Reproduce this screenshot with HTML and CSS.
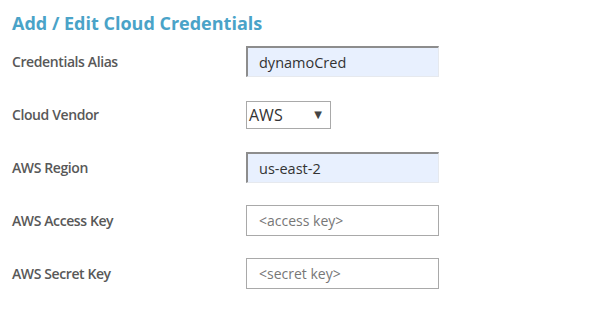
FILE: index.html
```html
<!DOCTYPE html>
<html lang="en">
<head>
    <meta charset="UTF-8">
    <meta name="viewport" content="width=device-width, initial-scale=1.0">
    <title>Add / Edit Cloud Credentials</title>
    <link rel="stylesheet" href="styles.css">
</head>
<body>

    <div class="cred-form">
        <h2>Add / Edit Cloud Credentials</h2>
        <div class="fields">
            <label class="field-label">Credentials Alias</label>
            <div class="field-input filled">dynamoCred</div>

            <label class="field-label">Cloud Vendor</label>
            <div class="field-select">
                <span>AWS</span>
                <span class="arrow">&#9660;</span>
            </div>

            <label class="field-label">AWS Region</label>
            <div class="field-input filled">us-east-2</div>

            <label class="field-label">AWS Access Key</label>
            <div class="field-input placeholder">&lt;access key&gt;</div>

            <label class="field-label">AWS Secret Key</label>
            <div class="field-input placeholder">&lt;secret key&gt;</div>
        </div>
    </div>

</body>
</html>
```

FILE: styles.css
```css
body {
    margin: 0;
    background: #fff;
    font-family: 'Open Sans', 'Liberation Sans', sans-serif;
}

.cred-form {
    padding: 10px 12px;
}

.cred-form h2 {
    margin: 0 0 10px 0;
    font-size: 18px;
    line-height: 26px;
    font-weight: 700;
    color: #4aa3c8; /* header blue */
}

.fields {
    display: grid;
    grid-template-columns: 234px 193px;
    grid-auto-rows: 31px;
    row-gap: 22px;
    align-items: center;
}

.field-label {
    font-size: 14px;
    font-weight: 600;
    letter-spacing: -0.4px;
    color: #585858;
}

.field-input {
    box-sizing: border-box;
    height: 31px;
    display: flex;
    align-items: center;
    padding-left: 12px;
    font-size: 14.5px;
    color: #333;
    border: 1px solid #a9a9a9;
}

/* autofilled look: inset border, pale blue */
.field-input.filled {
    background: #e8f0fe;
    border-style: solid;
    border-width: 2px 1px 1px 2px;
    border-color: #8d8d8d #e6e9ee #e6e9ee #8d8d8d;
    padding-left: 11px;
}

.field-input.placeholder {
    color: #777;
    font-size: 14px;
}

.field-select {
    box-sizing: border-box;
    width: 85px;
    height: 28px;
    display: flex;
    align-items: center;
    justify-content: space-between;
    padding: 0 8px 0 2px;
    border: 1px solid #a9a9a9;
    font-size: 16px;
    color: #333;
}

.field-select .arrow {
    font-size: 10px;
    color: #444;
    font-family: 'DejaVu Sans', sans-serif;
}
```
